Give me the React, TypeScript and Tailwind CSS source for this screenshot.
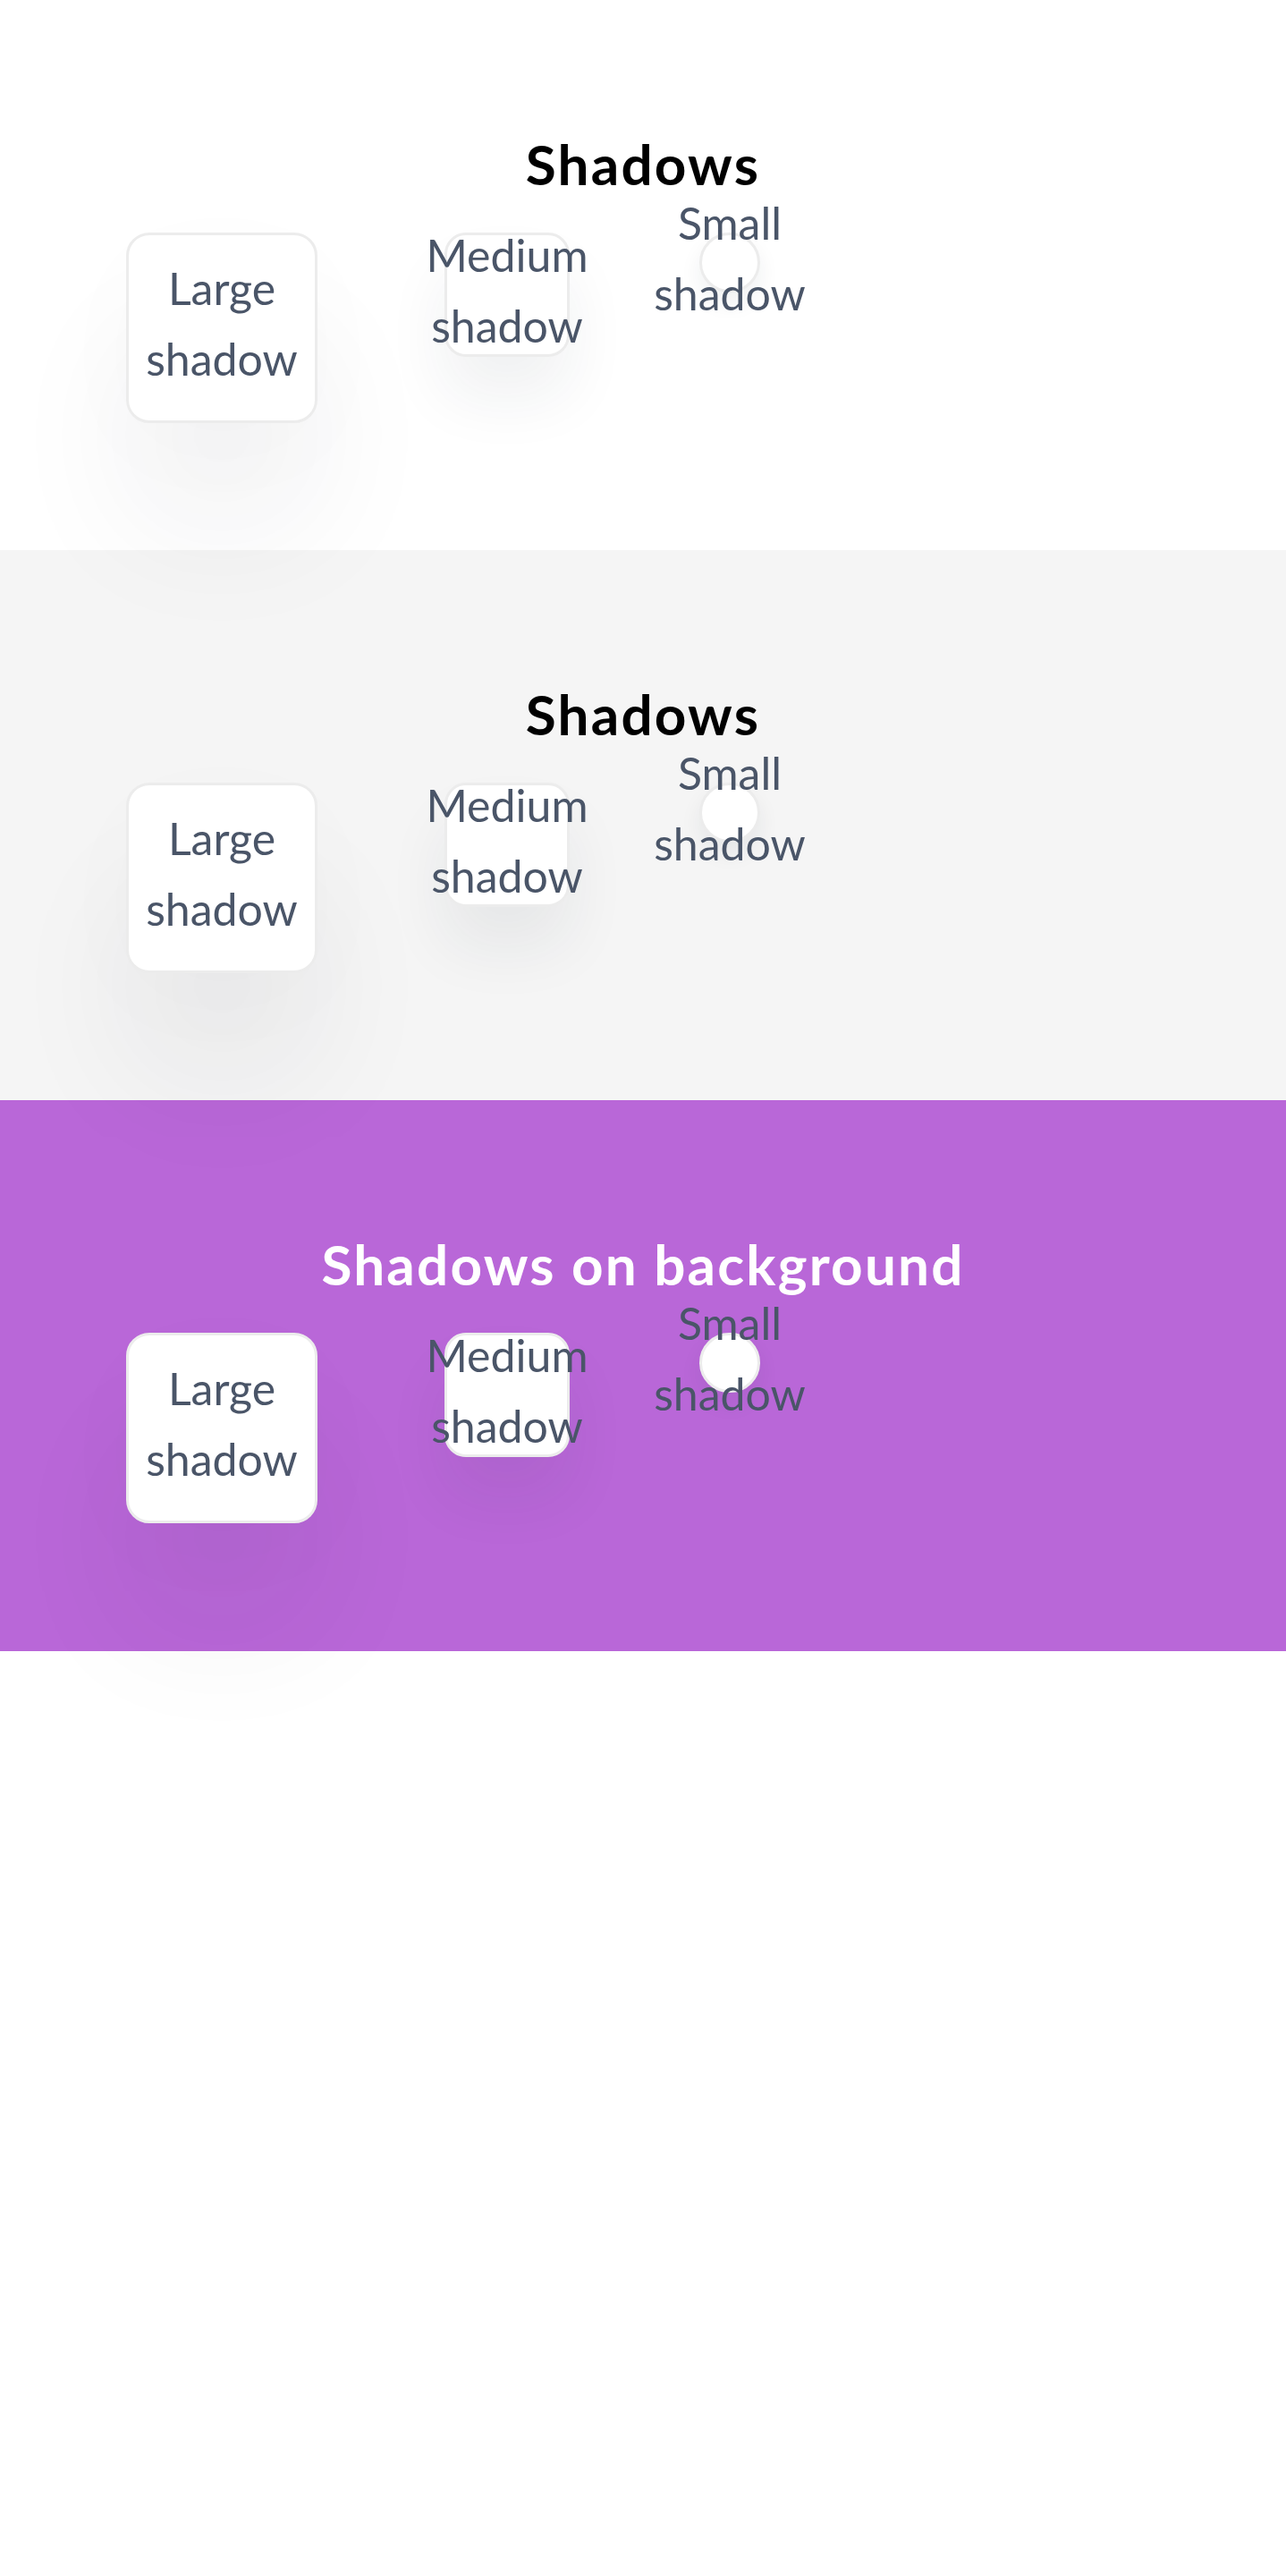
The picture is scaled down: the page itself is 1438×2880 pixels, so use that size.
import React from "react";

function Row() {
  return (
    <div className="flex items-start mt-[46px]">
      <div className="ml-[141px] w-[214px] h-[213px] shrink-0 rounded-[26px] border-[3px] border-[#ececec] bg-white shadow-[0_120px_150px_rgba(30,40,60,0.055),0_30px_120px_rgba(30,40,60,0.02)] flex items-center justify-center pb-[10px]">
        <span className="text-[50px] leading-[79px] text-[#4a5568] text-center">Large shadow</span>
      </div>
      <div className="ml-[142px] w-[140px] h-[139px] shrink-0 rounded-[24px] border-[3px] border-[#ececec] bg-white shadow-[0_45px_70px_rgba(30,40,60,0.065)] flex items-center justify-center pb-[10px]">
        <span className="text-[50px] leading-[79px] text-[#4a5568] text-center">Medium shadow</span>
      </div>
      <div className="ml-[145px] w-[68px] h-[67px] shrink-0 rounded-full border-[3px] border-[#ececec] bg-white shadow-[0_12px_24px_rgba(30,40,60,0.07)] flex items-center justify-center pb-[10px]">
        <span className="text-[50px] leading-[79px] text-[#4a5568] text-center">Small shadow</span>
      </div>
    </div>
  );
}

export default function App() {
  return (
    <div className="min-h-[2880px] bg-white font-['Lato',_sans-serif]">
      <section className="bg-white h-[615px] pt-[152px]">
        <h2 className="text-center text-[62px] leading-[62px] font-bold tracking-[2.2px] text-black">Shadows</h2>
        <Row />
      </section>
      <section className="bg-[#f5f5f5] h-[615px] pt-[152px]">
        <h2 className="text-center text-[62px] leading-[62px] font-bold tracking-[2.2px] text-black">Shadows</h2>
        <Row />
      </section>
      <section className="bg-[#b967d8] h-[616px] pt-[152px]">
        <h2 className="text-center text-[62px] leading-[62px] font-bold tracking-[2.2px] text-white">Shadows on background</h2>
        <Row />
      </section>
    </div>
  );
}
